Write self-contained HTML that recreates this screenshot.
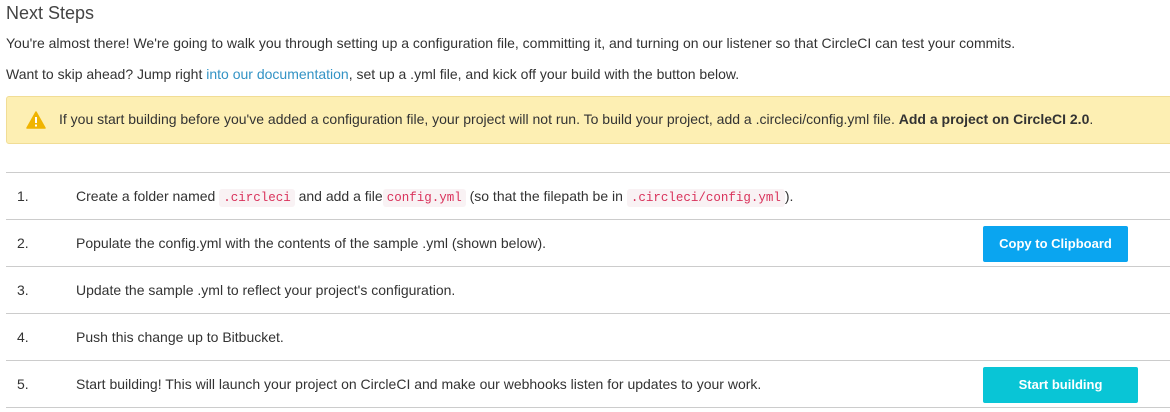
<!DOCTYPE html>
<html><head><style>
body{margin:0;width:1170px;height:412px;overflow:hidden;background:#fff;font-family:"Liberation Sans",sans-serif;color:#333;font-size:14px;}
.t{position:absolute;left:6px;top:3px;font-size:18px;color:#444}
.p{position:absolute;left:6px;white-space:nowrap}
a{color:#3393c5;text-decoration:none}
.warn{position:absolute;left:6px;top:96px;width:1170px;height:48px;background:#fdefb3;border:1px solid #f1dd95;border-radius:3px;box-sizing:border-box}
.warn span{position:absolute;left:52px;top:14px;white-space:nowrap}
.warn svg{position:absolute;left:19px;top:14px}
.row{position:absolute;left:6px;width:1164px;height:47px;border-top:1px solid #ccc;box-sizing:border-box}
.row .n{position:absolute;left:11px;top:15px}
.row .c{position:absolute;left:70px;top:15px;white-space:nowrap}
code{font-family:"Liberation Mono",monospace;color:#d9325b;background:#f9f2f4;padding:2px 4px;border-radius:3px;font-size:12.5px}
.btn{position:absolute;left:977px;height:36px;color:#fff;font-weight:bold;font-size:13px;text-align:center;line-height:36px;border-radius:2px}
</style></head><body>
<div class="t">Next Steps</div>
<div class="p" style="top:35px">You're almost there! We're going to walk you through setting up a configuration file, committing it, and turning on our listener so that CircleCI can test your commits.</div>
<div class="p" style="top:66px">Want to skip ahead? Jump right <a>into our documentation</a>, set up a .yml file, and kick off your build with the button below.</div>
<div class="warn"><svg width="20" height="18" viewBox="0 0 20 18"><path d="M10 1 L19 17 L1 17 Z" fill="#f0b400" stroke="#f0b400" stroke-linejoin="round" stroke-width="1.5"/><rect x="9" y="6" width="2" height="6" fill="#fff"/><rect x="9" y="13.5" width="2" height="2" fill="#fff"/></svg><span>If you start building before you've added a configuration file, your project will not run. To build your project, add a .circleci/config.yml file. <b>Add a project on CircleCI 2.0</b>.</span></div>
<div class="row" style="top:172px"><span class="n">1.</span><span class="c">Create a folder named <code>.circleci</code> and add a file<code>config.yml</code> (so that the filepath be in <code>.circleci/config.yml</code>).</span></div>
<div class="row" style="top:219px"><span class="n">2.</span><span class="c">Populate the config.yml with the contents of the sample .yml (shown below).</span><div class="btn" style="top:6px;width:145px;background:#0aa5f0">Copy to Clipboard</div></div>
<div class="row" style="top:266px"><span class="n">3.</span><span class="c">Update the sample .yml to reflect your project's configuration.</span></div>
<div class="row" style="top:313px"><span class="n">4.</span><span class="c">Push this change up to Bitbucket.</span></div>
<div class="row" style="top:360px;border-bottom:1px solid #ccc;height:48px"><span class="n">5.</span><span class="c">Start building! This will launch your project on CircleCI and make our webhooks listen for updates to your work.</span><div class="btn" style="top:6px;width:155px;background:#09c5d6">Start building</div></div>
</body></html>
